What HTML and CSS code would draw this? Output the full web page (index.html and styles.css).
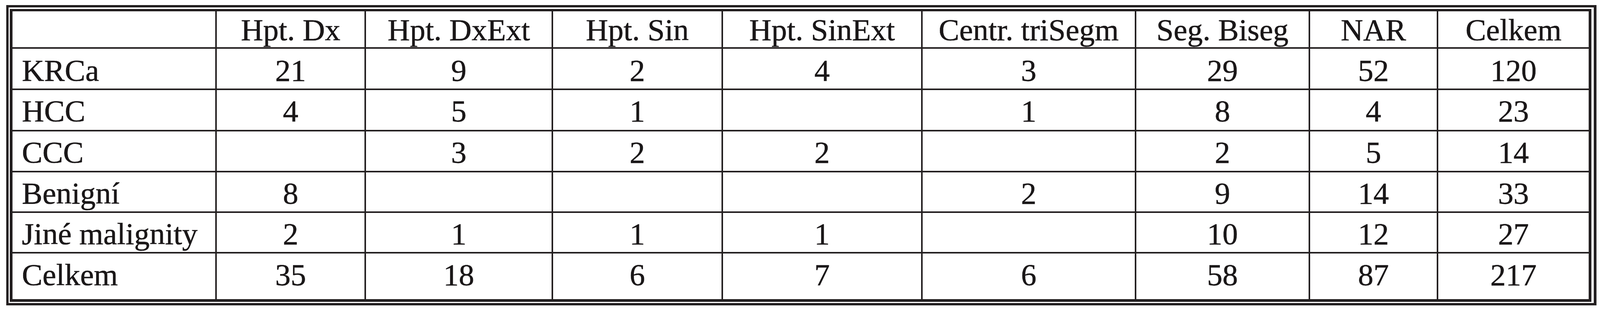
FILE: index.html
```html
<!DOCTYPE html>
<html lang="cs">
<head>
<meta charset="utf-8">
<title>Tabulka</title>
<link rel="stylesheet" href="styles.css">
</head>
<body>
<div class="frame">
  <div class="inner">
    <div class="grid" role="table">
      <div class="c h first"></div>
      <div class="c h">Hpt. Dx</div>
      <div class="c h">Hpt. DxExt</div>
      <div class="c h">Hpt. Sin</div>
      <div class="c h">Hpt. SinExt</div>
      <div class="c h">Centr. triSegm</div>
      <div class="c h">Seg. Biseg</div>
      <div class="c h">NAR</div>
      <div class="c h">Celkem</div>

      <div class="c r1 first">KRCa</div>
      <div class="c r1">21</div>
      <div class="c r1">9</div>
      <div class="c r1">2</div>
      <div class="c r1">4</div>
      <div class="c r1">3</div>
      <div class="c r1">29</div>
      <div class="c r1">52</div>
      <div class="c r1">120</div>

      <div class="c r first">HCC</div>
      <div class="c r">4</div>
      <div class="c r">5</div>
      <div class="c r">1</div>
      <div class="c r"></div>
      <div class="c r">1</div>
      <div class="c r">8</div>
      <div class="c r">4</div>
      <div class="c r">23</div>

      <div class="c r first">CCC</div>
      <div class="c r"></div>
      <div class="c r">3</div>
      <div class="c r">2</div>
      <div class="c r">2</div>
      <div class="c r"></div>
      <div class="c r">2</div>
      <div class="c r">5</div>
      <div class="c r">14</div>

      <div class="c r first">Benigní</div>
      <div class="c r">8</div>
      <div class="c r"></div>
      <div class="c r"></div>
      <div class="c r"></div>
      <div class="c r">2</div>
      <div class="c r">9</div>
      <div class="c r">14</div>
      <div class="c r">33</div>

      <div class="c r first">Jiné malignity</div>
      <div class="c r">2</div>
      <div class="c r">1</div>
      <div class="c r">1</div>
      <div class="c r">1</div>
      <div class="c r"></div>
      <div class="c r">10</div>
      <div class="c r">12</div>
      <div class="c r">27</div>

      <div class="c last first">Celkem</div>
      <div class="c last">35</div>
      <div class="c last">18</div>
      <div class="c last">6</div>
      <div class="c last">7</div>
      <div class="c last">6</div>
      <div class="c last">58</div>
      <div class="c last">87</div>
      <div class="c last">217</div>
    </div>
  </div>
</div>
</body>
</html>
```

FILE: styles.css
```css
html, body {
  margin: 0;
  padding: 0;
  background: #ffffff;
}

body {
  font-family: "Liberation Serif", "Times New Roman", serif;
  color: #1a1718;
}

.frame {
  margin: 13px 0 0 16px;
  width: fit-content;
  border-style: solid;
  border-color: #231f20;
  border-width: 6px 7px 6px 6px;
  padding: 4px 6px 3px 3px;
  background: #ffffff;
}

.inner {
  border-style: solid;
  border-color: #231f20;
  border-width: 6px 7px 7px 7px;
}

.grid {
  display: grid;
  grid-template-columns: 519px 378px 475px 431px 507px 543px 441px 324px 385px;
  grid-template-rows: 92px 102px 102px 101px 100px 100px 117px;
  gap: 4px;
  background: #231f20;
}

.c {
  background: #ffffff;
  font-size: 79px;
  line-height: 79px;
  text-align: center;
  white-space: nowrap;
  box-sizing: border-box;
  -webkit-text-stroke: 0.7px #1a1718;
}

.c.first {
  text-align: left;
  padding-left: 24px;
}

.h { padding-top: 8px; }
.r1 { padding-top: 16px; }
.r { padding-top: 14px; }
.last { padding-top: 15px; }
```
